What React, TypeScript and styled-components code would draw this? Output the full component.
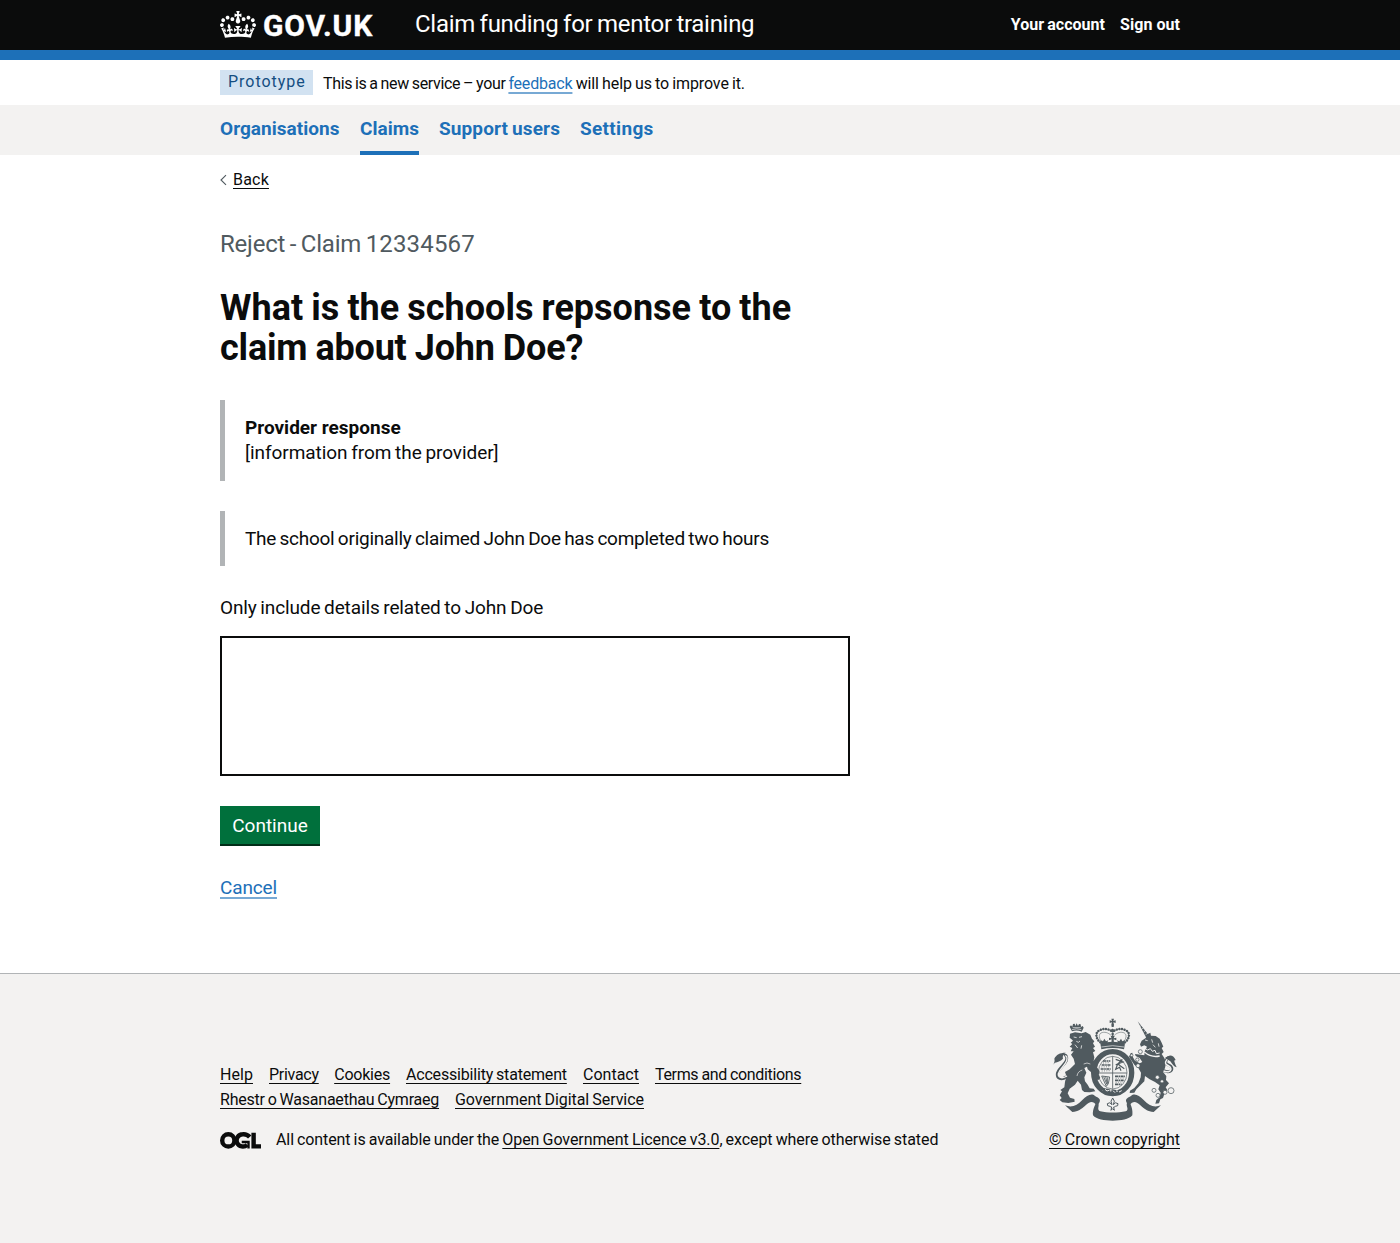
import React from "react";
import styled, { createGlobalStyle, css } from "styled-components";

const ink = "#0b0c0c";
const blue = "#1d70b8";
const pale = "#f3f2f1";
const midGrey = "#b1b4b6";
const darkGrey = "#505a5f";

const GlobalStyle = createGlobalStyle`
  * { box-sizing: border-box; }
  body {
    margin: 0;
    background: #fff;
    color: ${ink};
    font-family: Roboto, "Liberation Sans", sans-serif;
    font-size: 19px;
    line-height: 25px;
  }
`;

type Tracking = { $ls?: number; $ws?: number };

const tracking = css<Tracking>`
  letter-spacing: ${(p) => p.$ls ?? 0}px;
  word-spacing: ${(p) => p.$ws ?? 0}px;
`;

const Text = styled.span<Tracking>`
  ${tracking}
  white-space: pre;
`;

const Link = styled.a<Tracking & { $tone?: "blue" }>`
  ${tracking}
  color: ${(p) => (p.$tone === "blue" ? blue : ink)};
  text-decoration: underline;
  text-decoration-thickness: ${(p) => (p.$tone === "blue" ? 2 : 1)}px;
  text-decoration-color: ${(p) => (p.$tone === "blue" ? "rgba(29, 112, 184, 0.6)" : ink)};
  text-underline-offset: 3px;
  text-decoration-skip-ink: none;
  white-space: nowrap;
`;

const Container = styled.div`
  width: 960px;
  margin: 0 auto;
`;

const Header = styled.header`
  height: 60px;
  background: ${ink};
  border-bottom: 10px solid ${blue};
  color: #fff;
`;

const HeaderRow = styled(Container)`
  display: grid;
  grid-template-columns: 195px 1fr auto;
  align-items: center;
  height: 50px;
`;

const Logo = styled.a`
  display: flex;
  align-items: center;
  gap: 7px;
  color: #fff;
`;

const LogoText = styled.span`
  font-size: 30px;
  line-height: 30px;
  font-weight: 700;
  letter-spacing: 0.9px;
  -webkit-text-stroke: 0.4px #fff;
  padding-top: 2px;
`;

const ServiceName = styled.a<Tracking>`
  ${tracking}
  font-size: 24px;
  line-height: 30px;
  padding-bottom: 2px;
`;

const AccountLinks = styled.nav`
  display: flex;
  gap: 15px;
  font-size: 16px;
  line-height: 20px;
  font-weight: 700;
`;

const PhaseBanner = styled(Container)`
  display: flex;
  align-items: center;
  gap: 10px;
  height: 45px;
  font-size: 16px;
  line-height: 20px;
`;

const Tag = styled.strong`
  width: 93px;
  height: 25px;
  padding: 2px 0 0 8px;
  background: #d2e2f1;
  color: #144e81;
  font-weight: 400;
  letter-spacing: 0.98px;
`;

const PhaseText = styled.p`
  margin: 0;
  padding-top: 2px;
  white-space: nowrap;
`;

const PrimaryNav = styled.div`
  background: ${pale};
`;

const NavList = styled(Container)`
  display: flex;
  gap: 20px;
  height: 50px;
`;

const NavItem = styled.a<Tracking & { $current?: boolean; $width: number }>`
  ${tracking}
  width: ${(p) => p.$width}px;
  padding-top: 11px;
  border-bottom: 4px solid ${(p) => (p.$current ? blue : "transparent")};
  color: ${blue};
  font-weight: 700;
  white-space: nowrap;
`;

const BackRow = styled.div`
  display: flex;
  align-items: center;
  gap: 6px;
  padding-top: 15px;
  font-size: 16px;
  line-height: 20px;
`;

const Column = styled.main`
  width: 630px;
  padding-top: 39px;
`;

const Caption = styled.p`
  margin: 0 0 29px;
  color: ${darkGrey};
  font-size: 24px;
  line-height: 30px;
`;

const Heading = styled.h1`
  margin: 0 0 32px;
  font-size: 36px;
  line-height: 40px;
  font-weight: 700;
`;

const HeadingLine = styled.span<Tracking>`
  ${tracking}
  display: block;
`;

const Inset = styled.div<{ $height: number }>`
  display: flex;
  flex-direction: column;
  height: ${(p) => p.$height}px;
  margin-bottom: 30px;
  padding: 15px 20px;
  border-left: 5px solid ${midGrey};
`;

const Label = styled.label<Tracking>`
  ${tracking}
  display: block;
  margin: -1px 0 16px;
`;

const TextArea = styled.textarea`
  display: block;
  width: 630px;
  height: 140px;
  margin: 0 0 30px;
  padding: 5px;
  border: 2px solid ${ink};
  border-radius: 0;
  background: #fff;
  font: inherit;
  resize: none;
`;

const Button = styled.button`
  display: block;
  width: 100px;
  height: 38px;
  margin: 0 0 31px;
  padding: 1px 0 0;
  border: 0;
  border-radius: 0;
  background: #00703c;
  box-shadow: 0 2px 0 #002d18;
  color: #fff;
  font: 400 19px/25px Roboto, "Liberation Sans", sans-serif;
`;

const Footer = styled.footer`
  height: 270px;
  margin-top: 73px;
  border-top: 1px solid ${midGrey};
  background: ${pale};
  font-size: 16px;
  line-height: 20px;
`;

const FooterRow = styled(Container)`
  display: flex;
  justify-content: space-between;
  align-items: flex-end;
  height: 176px;
`;

const FooterLinks = styled.div`
  display: flex;
  flex-direction: column;
  gap: 5px;
  margin-bottom: 20px;
`;

const LinkRow = styled.div`
  display: flex;
  gap: 16px;
`;

const Licence = styled.div`
  display: flex;
  align-items: center;
  gap: 15px;
`;

const Copyright = styled.div`
  display: flex;
  flex-direction: column;
  align-items: center;
  gap: 9px;
`;

const FooterLink = styled(Link)<{ $width: number }>`
  width: ${(p) => p.$width}px;
`;

const Crown = styled.svg`
  display: block;
  width: 36px;
  height: 27px;
  margin-bottom: 2px;
`;

const CrownIcon = () => (
  <Crown viewBox="0 0 132 97" preserveAspectRatio="none" fill="currentColor" aria-hidden="true">
    <path
      fillRule="evenodd"
      d="M25 30.2c3.5 1.5 7.7-.2 9.1-3.7 1.5-3.6-.2-7.8-3.9-9.2-3.6-1.4-7.6.3-9.1 3.9-1.4 3.5.3 7.5 3.9 9zM9 39.5c3.6 1.5 7.8-.2 9.2-3.7 1.5-3.6-.2-7.8-3.9-9.1-3.6-1.5-7.6.2-9.1 3.8-1.4 3.5.3 7.5 3.8 9zM4.4 57.2c3.5 1.5 7.7-.2 9.1-3.8 1.5-3.6-.2-7.7-3.9-9.1-3.5-1.5-7.6.3-9.1 3.8-1.4 3.5.3 7.6 3.9 9.1zm38.3-21.4c3.5 1.5 7.7-.2 9.1-3.8 1.5-3.6-.2-7.7-3.9-9.1-3.6-1.5-7.6.3-9.1 3.8-1.3 3.6.4 7.7 3.9 9.1zm64.4-5.6c-3.6 1.5-7.8-.2-9.1-3.7-1.5-3.6.2-7.8 3.8-9.2 3.6-1.4 7.7.3 9.2 3.9 1.3 3.5-.4 7.5-3.9 9zm15.9 9.3c-3.6 1.5-7.7-.2-9.1-3.7-1.5-3.6.2-7.8 3.7-9.1 3.6-1.5 7.7.2 9.2 3.8 1.5 3.5-.3 7.5-3.8 9zm4.7 17.7c-3.6 1.5-7.8-.2-9.2-3.8-1.5-3.6.2-7.7 3.9-9.1 3.6-1.5 7.7.3 9.2 3.8 1.3 3.5-.4 7.6-3.9 9.1zM89.3 35.8c-3.6 1.5-7.8-.2-9.2-3.8-1.4-3.6.2-7.7 3.9-9.1 3.6-1.5 7.7.3 9.2 3.8 1.4 3.6-.3 7.7-3.9 9.1zM69.7 17.7l8.9 4.7V9.3l-8.9 2.8c-.2-.3-.5-.6-.9-.9L72.4 0H59.6l3.5 11.2c-.3.3-.6.5-.9.9l-8.8-2.8v13.1l8.8-4.7c.3.3.6.7.9.9l-5 15.4v.1c-.2.8-.4 1.6-.4 2.4 0 4.1 3.1 7.5 7 8.1h.2c.3 0 .7.1 1 .1.4 0 .7 0 1-.1h.2c4-.6 7.1-4.1 7.1-8.1 0-.8-.1-1.7-.4-2.4V34l-5.1-15.4c.4-.2.7-.6 1-.9zM66 92.8c16.9 0 32.8 1.1 47.1 3.2 4-16.9 8.9-26.7 14-33.5l-9.6-3.4c1 4.9 1.1 7.2 0 10.2-1.5-1.4-3-4.3-4.2-8.7L108.6 76c2.8-2 5-3.2 7.5-3.3-4.4 9.4-10 11.9-13.6 11.2-4.3-.8-6.3-4.6-5.6-7.9 1-4.7 5.7-5.9 8-.5 4.3-8.7-3-11.4-7.6-8.8 7.1-7.2 7.9-13.5 2.1-21.1-8 6.1-8.1 12.3-4.5 20.8-4.7-5.4-12.1-2.5-9.5 6.2 3.4-5.2 7.9-2 7.2 3.1-.6 4.3-6.4 7.8-13.5 7.2-10.3-.9-10.9-8-11.2-13.8 2.5-.5 7.1 1.8 11 7.3L80.2 60c-4.1 4.4-8 5.3-12.3 5.4 1.4-4.4 8-11.6 8-11.6H55.5s6.4 7.2 7.9 11.6c-4.2-.1-8-1-12.3-5.4l1.4 16.4c3.9-5.5 8.5-7.7 10.9-7.3-.3 5.8-.9 12.8-11.1 13.8-7.2.6-12.9-2.9-13.5-7.2-.7-5 3.8-8.3 7.1-3.1 2.7-8.7-4.6-11.6-9.4-6.2 3.7-8.5 3.6-14.7-4.6-20.8-5.8 7.6-5 13.9 2.2 21.1-4.7-2.6-11.9.1-7.7 8.8 2.3-5.5 7.1-4.2 8.1.5.7 3.3-1.3 7.1-5.7 7.9-3.5.7-9-1.8-13.5-11.2 2.5.1 4.7 1.3 7.5 3.3l-4.7-15.4c-1.2 4.4-2.7 7.2-4.3 8.7-1.1-3-.9-5.3 0-10.2l-9.5 3.4c5 6.9 9.9 16.7 14 33.5 14.8-2.1 30.8-3.2 47.7-3.2z"
    />
  </Crown>
);

const BackChevron = () => (
  <svg width="7" height="12" viewBox="0 0 7 12" fill="none" stroke={darkGrey} strokeWidth="1.1" aria-hidden="true">
    <path d="M6 1.2L1 6l5 4.8" />
  </svg>
);

const LicenceLogo = () => (
  <svg width="41" height="18" viewBox="0 0 483 206" fill="none" stroke={ink} strokeWidth="52" aria-hidden="true">
    <circle cx="98" cy="108" r="72" />
    <path d="M350 68A96 96 0 0 0 268 36a72 72 0 1 0 52 122" />
    <path d="M256 126h80v76" strokeWidth="28" />
    <path d="M396 18v160h87" />
  </svg>
);

/* Royal coat of arms: lion and unicorn supporters, garter, crown and ribbon. */
const CoatOfArms = () => (
  <svg width="126" height="103" viewBox="38 22 376 309" fill={darkGrey} aria-hidden="true">
    <g>
      <path d="M76 284C98 292 112 284 128 268C142 254 156 246 166 256C176 262 186 264 178 278L170 284C160 268 148 274 138 284C124 296 116 303 98 304Z" />
      <path d="M364 284C342 292 328 284 312 268C298 254 284 246 274 256C264 262 254 264 262 278L270 284C280 268 292 274 302 284C316 296 324 303 342 304Z" />
      <path d="M172 270C164 288 158 298 160 314C170 326 194 330 219 330C244 330 268 326 278 314C280 298 276 288 268 270L262 276C258 288 270 296 258 302C236 307 202 307 182 302C170 296 180 288 176 276Z" />
    </g>
    <ellipse cx="219" cy="186" rx="57" ry="63" fill="none" stroke={darkGrey} strokeWidth="16" />
    <path d="M188 240L250 242" stroke={pale} strokeWidth="3" />
    <path d="M190 232l22 4-2 16-24-6zM216 236l14 2-2 14-14-2zM234 238l14-4 4 10-16 8z" />
    <path d="M196 236l6 5 8-3M220 240l6 6M238 244l8-4" fill="none" stroke={pale} strokeWidth="3" />
    <g fill="none" stroke={darkGrey} strokeWidth="3">
      <ellipse cx="219" cy="186" rx="43" ry="49" strokeWidth="2" />
      <path d="M219 137V234M176 187H262" strokeWidth="2.5" />
      <path d="M190 151h22M186 163h28M183 175h30" strokeWidth="5" strokeDasharray="9 1.5 5 1.5" />
      <path d="M190 157l20-1M185 169l26-1M186 181l26-1" strokeWidth="2" strokeDasharray="3 4" />
      <path d="M226 197h30M226 209h28M226 221h20" strokeWidth="5" strokeDasharray="9 1.5 5 1.5" />
      <path d="M228 203l24-1M228 215l22-1" strokeWidth="2" strokeDasharray="3 4" />
      <path d="M228 146l22 8-16 6 20 14M248 146l-14 14-6 16 12-6 4 10M228 162l12-2" strokeWidth="3.5" />
      <path d="M186 196l24 3-4 20-6 8zM192 198l10 24M198 198l5 22M204 200v18" strokeWidth="2.6" />
    </g>
    <g>
      <path d="M215 24h8l-2 7 7-2v8l-7-2 2 7-1 7h-6l-1-7 2-7-7 2v-8l7 2z" />
      <path d="M182 98q37-10 74 0l-3 18q-34-8-68 0z" />
      <path d="M185 109q34-8 68 0" fill="none" stroke={pale} strokeWidth="2" />
      <path d="M215 100l1-14-8 3v-8l8 2-3-7h12l-3 7 8-2v8l-8-3 1 14z" />
      <path d="M186 100l-4-12 8 4 4-8 5 8 7-3-4 9zM252 100l4-12-8 4-4-8-5 8-7-3 4 9z" />
      <path
        d="M182 95C168 84 166 66 178 60C190 52 206 54 217 62C219 58 219 56 219 52M256 95C270 84 272 66 260 60C248 52 232 54 221 62M219 62V78"
        fill="none" stroke={darkGrey} strokeWidth="7.5" strokeDasharray="0.1 7.8" strokeLinecap="round"
      />
      <path d="M186 93C178 84 176 72 184 67C194 62 206 66 214 74M252 93C260 84 262 72 254 67C244 62 232 66 224 74" fill="none" stroke={darkGrey} strokeWidth="1.6" />
    </g>
    <g>
      <path d="M97 62l-7-14 4-4 4 4 2-8 5-1 2 7 4-8 4 8 3-6 5 1 1 8 5-3 3 5-6 12q-15-6-29-1z" />
      <path d="M97 57q14-5 28 0M99 51l24 0" fill="none" stroke={pale} strokeWidth="2" />
      <path d="M91 69L106 65L126 68L138 64L152 72L157 84L164 92L160 98L166 108L160 112L167 121L160 125L164 140L162 150L174 162L172 170L180 182L177 192L182 202L176 208L166 206L160 209L162 198L158 188L144 176L142 168L134 172L140 186L134 200L136 212L144 222L150 233L162 234L167 242L150 245L134 244L127 238L124 222L114 210L106 222L90 234L84 248L91 261L104 265L105 273L86 277L68 275L60 268L66 262L60 254L67 242L62 238L74 230L76 214L80 196L76 184L90 176L106 160L102 144L94 132L102 122L93 122L98 112L90 108L98 100L93 96L100 90L94 84L90 82Z" />
      <path d="M102 79l9 2M118 80l9-2M110 92l6 3 5-4M106 102l8 10M126 104l-2 10" fill="none" stroke={pale} strokeWidth="2.4" />
      <path d="M128 178q-14 4-16 18M132 160q10-6 20 0" fill="none" stroke={pale} strokeWidth="2" />
      <path d="M80 198C66 210 50 204 53 188C58 172 74 164 80 150C84 138 78 130 72 134" fill="none" stroke={darkGrey} strokeWidth="8.5" />
      <path d="M82 196C66 206 54 200 56 189C60 174 76 166 81 150C84 140 80 134 76 136" fill="none" stroke={pale} strokeWidth="4" />
      <path d="M39 163C44 158 46 150 44 144C50 132 60 126 78 126C70 130 68 136 70 144C62 152 54 154 46 156Z" />
    </g>
    <g>
      <path d="M294 32L330 77L320 82Z" />
      <path d="M301 48l6-6M306 56l7-6M312 64l7-6M318 72l7-5" stroke={pale} strokeWidth="2" />
      <path d="M301 101L306 90L318 82L324 70L332 66L334 75L348 76L360 84L366 96L371 108L366 112L372 124L366 130L374 142L379 156L376 172L370 184L380 196L379 208L388 218L378 230L383 238L374 250L370 262L362 266L358 278L347 279L350 268L360 260L363 246L356 236L360 224L346 214L330 206L316 196L314 212L302 224L290 236L284 246L270 247L271 240L284 232L296 218L303 200L304 186L296 172L284 162L276 150L268 138L273 128L278 126L279 138L286 150L300 158L308 154L300 142L288 136L286 130L304 132L314 134L315 122L322 108L314 104L304 108Z" />
      <path d="M316 88l8 2M336 86l3 10M340 102l7 8M356 98l2 10" fill="none" stroke={pale} strokeWidth="2.4" />
      <path d="M314 112l10 6 8-4 6 8 8-3 4 10 10-2" fill="none" stroke={pale} strokeWidth="3" />
      <path d="M314 124q22 18 46 12" fill="none" stroke={pale} strokeWidth="4" />
      <path d="M372 180C390 188 402 178 394 168C386 160 374 162 380 148C386 138 396 134 404 150" fill="none" stroke={darkGrey} strokeWidth="9" />
      <path d="M372 181C388 188 398 178 392 170C384 162 372 162 380 149C384 142 390 142 394 146" fill="none" stroke={pale} strokeWidth="4.5" />
      <path d="M376 142C386 132 402 136 404 152C406 160 408 164 411 170C402 168 398 160 392 152Z" />
    </g>
    <g fill={pale} stroke={darkGrey} strokeWidth="2.2">
      <circle cx="302" cy="123" r="6" />
      <circle cx="276" cy="134" r="4" />
      <circle cx="293" cy="147" r="5" />
      <circle cx="295" cy="165" r="6" />
      <circle cx="353" cy="200" r="6" />
      <circle cx="367" cy="212" r="5" />
      <circle cx="343" cy="239" r="6" />
      <circle cx="355" cy="254" r="6" />
      <circle cx="376" cy="245" r="6" />
      <circle cx="394" cy="240" r="9" />
    </g>
    <path d="M219 262q9 9 2 20 6-10 14-3 2 8-8 8-2 2-5 2l2 10-5-5-5 5 2-10q-3 0-5-2-10 0-8-8 8-7 14 3-7-11 2-20z" fill={pale} stroke={darkGrey} strokeWidth="3" />
  </svg>
);

const NAV = [
  { label: "Organisations", width: 120, ls: 0.03 },
  { label: "Claims", width: 59, ls: 0.02, current: true },
  { label: "Support users", width: 121, ls: 0.11, ws: -0.8 },
  { label: "Settings", width: 74, ls: 0.32 },
];

const FOOTER_LINKS = [
  [
    { label: "Help", width: 33, ls: 0.05 },
    { label: "Privacy", width: 49.2, ls: -0.28 },
    { label: "Cookies", width: 55.8, ls: -0.22 },
    { label: "Accessibility statement", width: 161, ls: -0.19, ws: -0.8 },
    { label: "Contact", width: 56, ls: 0.01 },
    { label: "Terms and conditions", width: 146, ls: -0.34, ws: -0.5 },
  ],
  [
    { label: "Rhestr o Wasanaethau Cymraeg", width: 219, ls: -0.22, ws: -0.8 },
    { label: "Government Digital Service", width: 189, ls: -0.05, ws: -0.85 },
  ],
];

export default function App() {
  return (
    <>
      <GlobalStyle />
      <Header>
        <HeaderRow>
          <Logo>
            <CrownIcon />
            <LogoText>GOV.UK</LogoText>
          </Logo>
          <ServiceName $ls={-0.29} $ws={-1.03}>Claim funding for mentor training</ServiceName>
          <AccountLinks>
            <Text $ls={0.02} $ws={-0.8}>Your account</Text>
            <Text $ls={0.05}>Sign out</Text>
          </AccountLinks>
        </HeaderRow>
      </Header>
      <PhaseBanner>
        <Tag>Prototype</Tag>
        <PhaseText>
          <Text $ls={-0.32} $ws={-0.85}>{"This is a new service – your "}</Text>
          <Link $tone="blue" $ls={-0.19}>feedback</Link>
          <Text $ls={-0.12} $ws={-0.62}>{" will help us to improve it."}</Text>
        </PhaseText>
      </PhaseBanner>
      <PrimaryNav>
        <NavList>
          {NAV.map((item) => (
            <NavItem key={item.label} $width={item.width} $ls={item.ls} $ws={item.ws} $current={item.current}>
              {item.label}
            </NavItem>
          ))}
        </NavList>
      </PrimaryNav>
      <Container>
        <BackRow>
          <BackChevron />
          <Link $ls={0.2}>Back</Link>
        </BackRow>
        <Column>
          <Caption>
            <Text $ls={-0.2} $ws={-1.2}>{"Reject - Claim "}</Text>
            <Text $ls={0.15}>12334567</Text>
          </Caption>
          <Heading>
            <HeadingLine $ls={0} $ws={-0.8}>What is the schools repsonse to the</HeadingLine>
            <HeadingLine $ls={-0.2} $ws={-0.6}>claim about John Doe?</HeadingLine>
          </Heading>
          <Inset $height={81}>
            <strong>Provider response</strong>
            <Text $ls={-0.06} $ws={-0.9}>[information from the provider]</Text>
          </Inset>
          <Inset $height={55}>
            <Text $ls={-0.26} $ws={-1.04}>The school originally claimed John Doe has completed two hours</Text>
          </Inset>
          <Label htmlFor="details" $ls={-0.13} $ws={-0.88}>Only include details related to John Doe</Label>
          <TextArea id="details" />
          <Button>Continue</Button>
          <Link $tone="blue" $ls={-0.14}>Cancel</Link>
        </Column>
      </Container>
      <Footer>
        <FooterRow>
          <div>
            <FooterLinks>
              {FOOTER_LINKS.map((row, i) => (
                <LinkRow key={i}>
                  {row.map((l) => (
                    <FooterLink key={l.label} $width={l.width} $ls={l.ls} $ws={l.ws}>{l.label}</FooterLink>
                  ))}
                </LinkRow>
              ))}
            </FooterLinks>
            <Licence>
              <LicenceLogo />
              <span>
                <Text $ls={-0.1} $ws={-0.73}>{"All content is available under the "}</Text>
                <Link $ls={-0.08} $ws={-0.6}>Open Government Licence v3.0</Link>
                <Text $ls={-0.07} $ws={-0.78}>, except where otherwise stated</Text>
              </span>
            </Licence>
          </div>
          <Copyright>
            <CoatOfArms />
            <Link $ws={-0.75}>© Crown copyright</Link>
          </Copyright>
        </FooterRow>
      </Footer>
    </>
  );
}
